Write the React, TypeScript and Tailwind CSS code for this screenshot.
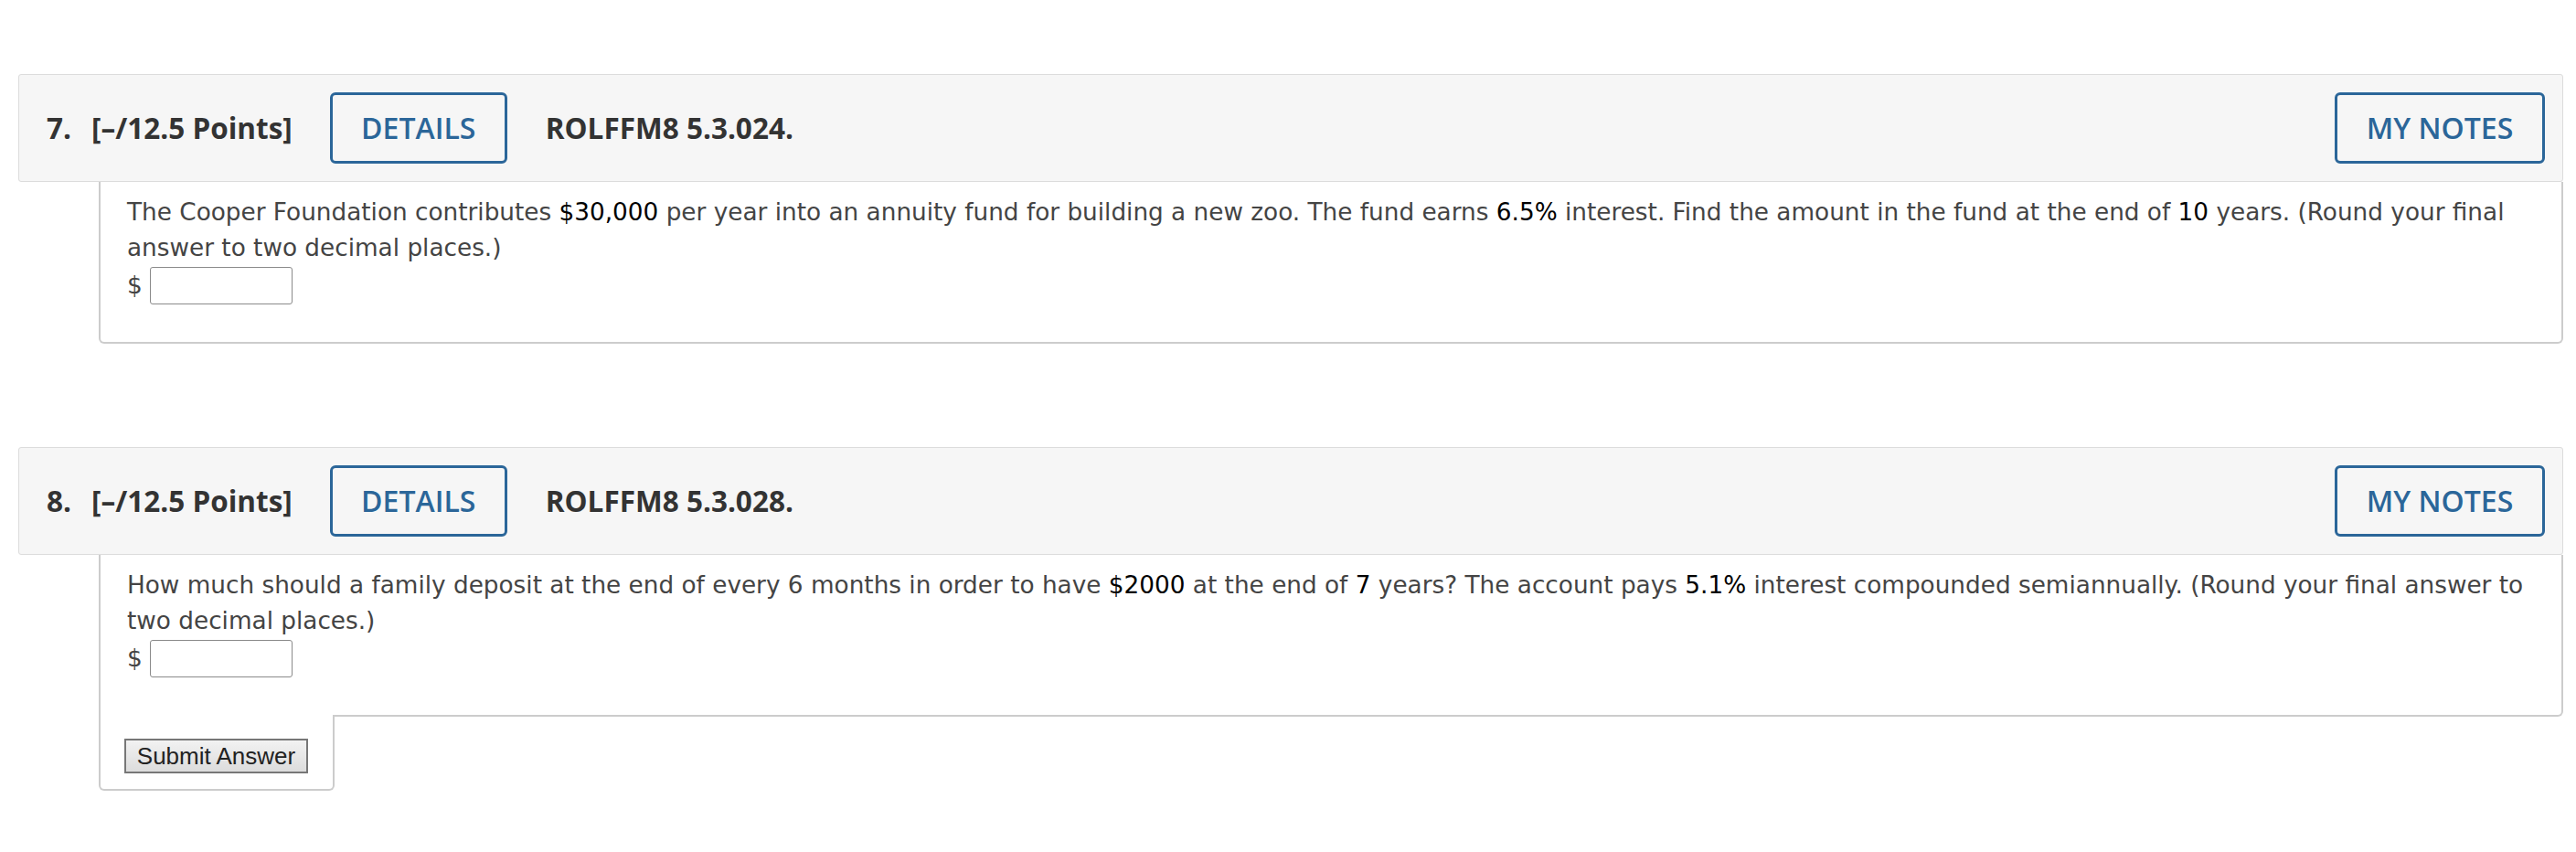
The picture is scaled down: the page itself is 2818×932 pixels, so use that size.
import React from 'react';

type Part = { text: string; strong?: boolean };

interface QuestionProps {
  num: number;
  code: string;
  parts: Part[];
  showSubmit?: boolean;
  className?: string;
}

const headFont = { fontFamily: '"Open Sans", "Liberation Sans", sans-serif' };
const bodyFont = { fontFamily: '"DejaVu Sans", Verdana, sans-serif' };

const Question = ({ num, code, parts, showSubmit, className = '' }: QuestionProps) => {
  return (
    <div className={className}>
      {/* header bar */}
      <div
        className="h-[118px] border border-[#dcdcdc] rounded-[3px] bg-[#f6f6f6] flex items-center pl-[30px] pr-[19px] text-[#333] text-[31.5px] leading-none font-bold"
        style={headFont}
      >
        <span>{num}.</span>
        <span className="ml-[22px]">[–/12.5 Points]</span>
        <button className="ml-[41px] w-[194px] h-[78px] border-[3px] border-[#2b6699] rounded-[6px] text-[#2b6699] text-[32px] font-semibold flex items-center justify-center">
          DETAILS
        </button>
        <span className="ml-[42px]">{code}</span>
        <button className="ml-auto w-[230px] h-[78px] border-[3px] border-[#2b6699] rounded-[6px] text-[#2b6699] text-[32px] font-semibold flex items-center justify-center">
          MY NOTES
        </button>
      </div>

      {/* question body */}
      <div className="ml-[88px]">
        <div
          className={`bg-white border-x-2 border-b-2 border-[#cccccc] ${
            showSubmit ? 'rounded-br-[6px]' : 'rounded-b-[6px]'
          } pl-[29px] pr-[24px] pt-[14px] pb-[41px] text-[26.3px] leading-[39px] text-[#444]`}
          style={bodyFont}
        >
          <p>
            {parts.map((p, i) =>
              p.strong ? (
                <span key={i} className="text-black">
                  {p.text}
                </span>
              ) : (
                <span key={i}>{p.text}</span>
              )
            )}
          </p>
          <div className="flex items-center h-[41px] mt-[1px]">
            <span>$</span>
            <input
              type="text"
              className="ml-[8px] w-[156px] h-[41px] border border-[#8a8a8a] rounded-[3px] bg-white outline-none"
            />
          </div>
        </div>

        {showSubmit && (
          <div className="relative -mt-[2px] w-[258px] bg-white border-x-2 border-b-2 border-[#cccccc] rounded-b-[6px] pl-[26px] pt-[26px] pb-[17px]">
            <button
              className="w-[201px] h-[38px] border-2 border-[#777] bg-gradient-to-b from-[#f2f2f2] to-[#dcdcdc] text-[#222] text-[26px] leading-none flex items-center justify-center"
              style={{ fontFamily: '"Liberation Sans", Arial, sans-serif' }}
            >
              Submit Answer
            </button>
          </div>
        )}
      </div>
    </div>
  );
};

export default function App() {
  return (
    <div className="w-full h-[932px] bg-white pt-[81px] pl-[20px] pr-[14px]">
      <Question
        num={7}
        code="ROLFFM8 5.3.024."
        parts={[
          { text: 'The Cooper Foundation contributes ' },
          { text: '$30,000', strong: true },
          { text: ' per year into an annuity fund for building a new zoo. The fund earns ' },
          { text: '6.5%', strong: true },
          { text: ' interest. Find the amount in the fund at the end of ' },
          { text: '10', strong: true },
          { text: ' years. (Round your final answer to two decimal places.)' },
        ]}
      />
      <Question
        className="mt-[113px]"
        num={8}
        code="ROLFFM8 5.3.028."
        showSubmit
        parts={[
          { text: 'How much should a family deposit at the end of every 6 months in order to have ' },
          { text: '$2000', strong: true },
          { text: ' at the end of ' },
          { text: '7', strong: true },
          { text: ' years? The account pays ' },
          { text: '5.1%', strong: true },
          { text: ' interest compounded semiannually. (Round your final answer to two decimal places.)' },
        ]}
      />
    </div>
  );
}
